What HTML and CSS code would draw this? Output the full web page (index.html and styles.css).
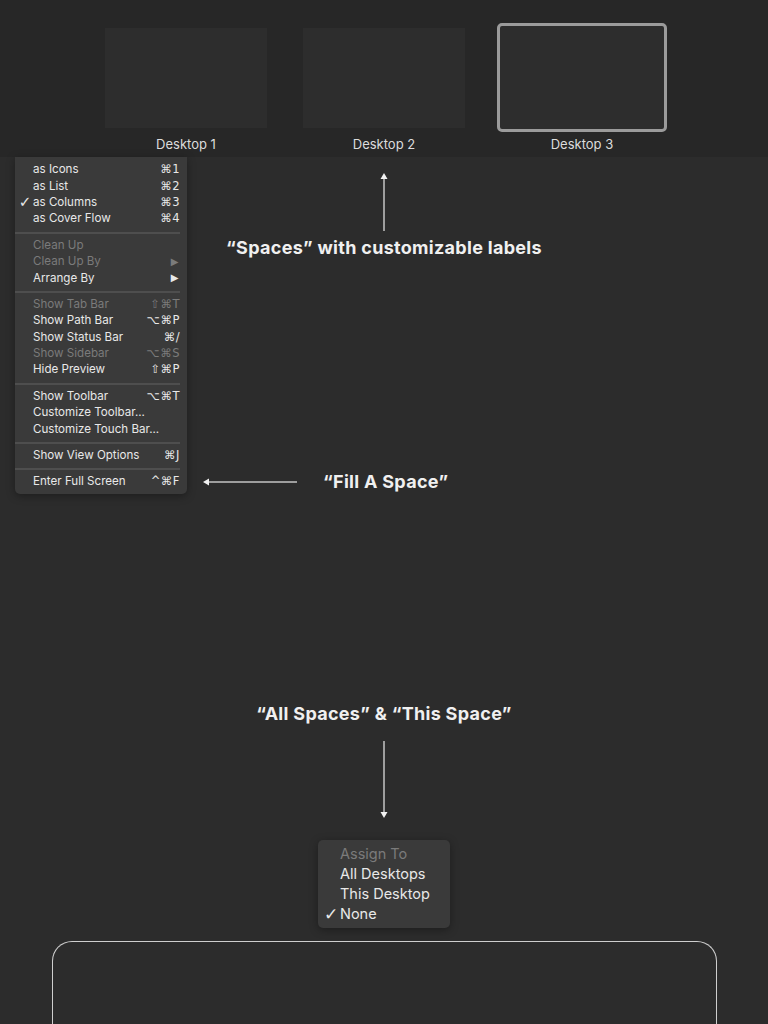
FILE: index.html
```html
<!DOCTYPE html>
<html>
<head>
  <meta charset="UTF-8" />
  <meta name="viewport" content="width=device-width, initial-scale=1" />
  <title>Spaces</title>
  <link rel="stylesheet" href="styles.css">
</head>
<body>
  <header class="spaces-bar">
    <div class="space">
      <div class="thumb"></div>
      <span class="space-name">Desktop 1</span>
    </div>
    <div class="space">
      <div class="thumb"></div>
      <span class="space-name">Desktop 2</span>
    </div>
    <div class="space current">
      <div class="thumb"></div>
      <span class="space-name">Desktop 3</span>
    </div>
  </header>

  <section class="view-section">
    <ul class="menu view-menu">
      <li><span class="check"></span><span class="label">as Icons</span><span class="key">⌘1</span></li>
      <li><span class="check"></span><span class="label">as List</span><span class="key">⌘2</span></li>
      <li><span class="check">✓</span><span class="label">as Columns</span><span class="key">⌘3</span></li>
      <li><span class="check"></span><span class="label">as Cover Flow</span><span class="key">⌘4</span></li>
      <li class="sep"></li>
      <li class="off"><span class="check"></span><span class="label">Clean Up</span></li>
      <li class="off"><span class="check"></span><span class="label">Clean Up By</span><span class="key sub">▶</span></li>
      <li><span class="check"></span><span class="label">Arrange By</span><span class="key sub">▶</span></li>
      <li class="sep"></li>
      <li class="off"><span class="check"></span><span class="label">Show Tab Bar</span><span class="key">⇧⌘T</span></li>
      <li><span class="check"></span><span class="label">Show Path Bar</span><span class="key">⌥⌘P</span></li>
      <li><span class="check"></span><span class="label">Show Status Bar</span><span class="key">⌘/</span></li>
      <li class="off"><span class="check"></span><span class="label">Show Sidebar</span><span class="key">⌥⌘S</span></li>
      <li><span class="check"></span><span class="label">Hide Preview</span><span class="key">⇧⌘P</span></li>
      <li class="sep"></li>
      <li><span class="check"></span><span class="label">Show Toolbar</span><span class="key">⌥⌘T</span></li>
      <li><span class="check"></span><span class="label">Customize Toolbar...</span></li>
      <li><span class="check"></span><span class="label">Customize Touch Bar...</span></li>
      <li class="sep"></li>
      <li><span class="check"></span><span class="label">Show View Options</span><span class="key">⌘J</span></li>
      <li class="sep"></li>
      <li><span class="check"></span><span class="label">Enter Full Screen</span><span class="key">^⌘F</span></li>
    </ul>

    <div class="notes">
      <div class="callout">
        <svg class="arrow-up" width="10" height="58" viewBox="0 0 10 58">
          <line x1="5" y1="5" x2="5" y2="58" />
          <path d="M5 0 L8.5 6 L1.5 6 Z" />
        </svg>
        <p class="note">“Spaces” with customizable labels</p>
      </div>
      <div class="fill-row">
        <svg class="arrow-left" width="94" height="10" viewBox="0 0 94 10">
          <line x1="5" y1="5" x2="94" y2="5" />
          <path d="M0 5 L6 1.5 L6 8.5 Z" />
        </svg>
        <p class="note">“Fill A Space”</p>
      </div>
    </div>
  </section>

  <section class="assign-section">
    <p class="note">“All Spaces” &amp; “This Space”</p>
    <svg class="arrow-down" width="10" height="77" viewBox="0 0 10 77">
      <line x1="5" y1="0" x2="5" y2="72" />
      <path d="M5 77 L8.5 71 L1.5 71 Z" />
    </svg>
    <ul class="menu assign-menu">
      <li class="off"><span class="check"></span><span class="label">Assign To</span></li>
      <li><span class="check"></span><span class="label">All Desktops</span></li>
      <li><span class="check"></span><span class="label">This Desktop</span></li>
      <li><span class="check">✓</span><span class="label">None</span></li>
    </ul>
  </section>

  <div class="screen-frame"></div>
</body>
</html>
```

FILE: styles.css
```css
* {
  box-sizing: border-box;
}
body {
  margin: 0;
  background: #2c2c2c;
  color: #e8e8e8;
  font-family: Inter, "Noto Sans", sans-serif;
  height: 1024px;
  overflow: hidden;
}
p, ul {
  margin: 0;
  padding: 0;
}

/* spaces bar */
.spaces-bar {
  height: 157px;
  background: #272727;
  display: flex;
  justify-content: center;
  padding-top: 23px;
}
.space {
  width: 198px;
  display: flex;
  flex-direction: column;
  align-items: center;
}
.thumb {
  width: 162px;
  height: 100px;
  margin: 5px 0 4px;
  background: #2d2d2d;
}
.current .thumb {
  width: 170px;
  height: 109px;
  margin: 0;
  border: 3px solid #9b9b9b;
  border-radius: 5px;
}
.space-name {
  margin-top: 4px;
  font-size: 13px;
  line-height: 16px;
  color: #dcdcdc;
}

/* menus */
.menu {
  list-style: none;
  background: #3a3a3a;
  box-shadow: 0 2px 8px rgba(0, 0, 0, 0.35);
}
.menu li {
  display: flex;
  align-items: center;
  white-space: nowrap;
}
.menu .check {
  width: 18px;
  flex: none;
  text-align: center;
  font-family: "DejaVu Sans", sans-serif;
  font-weight: 700;
}
.menu .label {
  flex: 1;
}
.menu .off {
  color: #7b7b7b;
}
.menu .sep {
  height: 2px;
  margin: 5px 0 3px;
  background: #4e4e4e;
}
.view-menu {
  width: 172px;
  margin-left: 15px;
  padding: 4px 7px 4px 0;
  border-radius: 0 0 5px 5px;
  font-size: 11.6px;
}
.view-menu li:not(.sep) {
  height: 16.4px;
}
.view-menu .check {
  width: 18px;
  padding-left: 2px;
  font-size: 15px;
}
.key {
  font-family: "DejaVu Sans", sans-serif;
  font-size: 11.5px;
  letter-spacing: 0.5px;
}
.key.sub {
  font-size: 10px;
  padding-right: 1px;
}

/* annotations */
.view-section {
  display: flex;
}
.notes {
  width: 394px;
  display: flex;
  flex-direction: column;
}
.callout {
  padding-top: 16px;
  display: flex;
  flex-direction: column;
  align-items: center;
}
.note {
  font-size: 18px;
  font-weight: 700;
  line-height: 20px;
  letter-spacing: 0.3px;
  color: #f0f0f0;
}
.callout .note {
  margin-top: 7px;
}
svg line {
  stroke: #c4c4c4;
  stroke-width: 1.5;
}
svg path {
  fill: #f2f2f2;
}
.arrow-up, .arrow-down {
  display: block;
}
.fill-row {
  margin-top: auto;
  margin-bottom: 2px;
  padding-left: 16px;
  display: flex;
  align-items: center;
  gap: 26px;
}

.assign-section {
  display: flex;
  flex-direction: column;
  align-items: center;
  padding-top: 209px;
}
.assign-section .note {
  line-height: 22px;
}
.arrow-down {
  margin-top: 16px;
}
.assign-menu {
  width: 132px;
  margin-top: 22px;
  padding: 4px 0;
  border-radius: 5px;
  font-size: 14.5px;
}
.assign-menu li {
  height: 20px;
}
.assign-menu .check {
  width: 22px;
  padding-left: 4px;
  font-size: 17px;
}

/* bottom edge of the screen, cut off by the frame */
.screen-frame {
  width: 665px;
  height: 83px;
  margin: 13px auto 0;
  border: 1.5px solid #cfcfcf;
  border-bottom: none;
  border-radius: 20px 20px 0 0;
}
```
